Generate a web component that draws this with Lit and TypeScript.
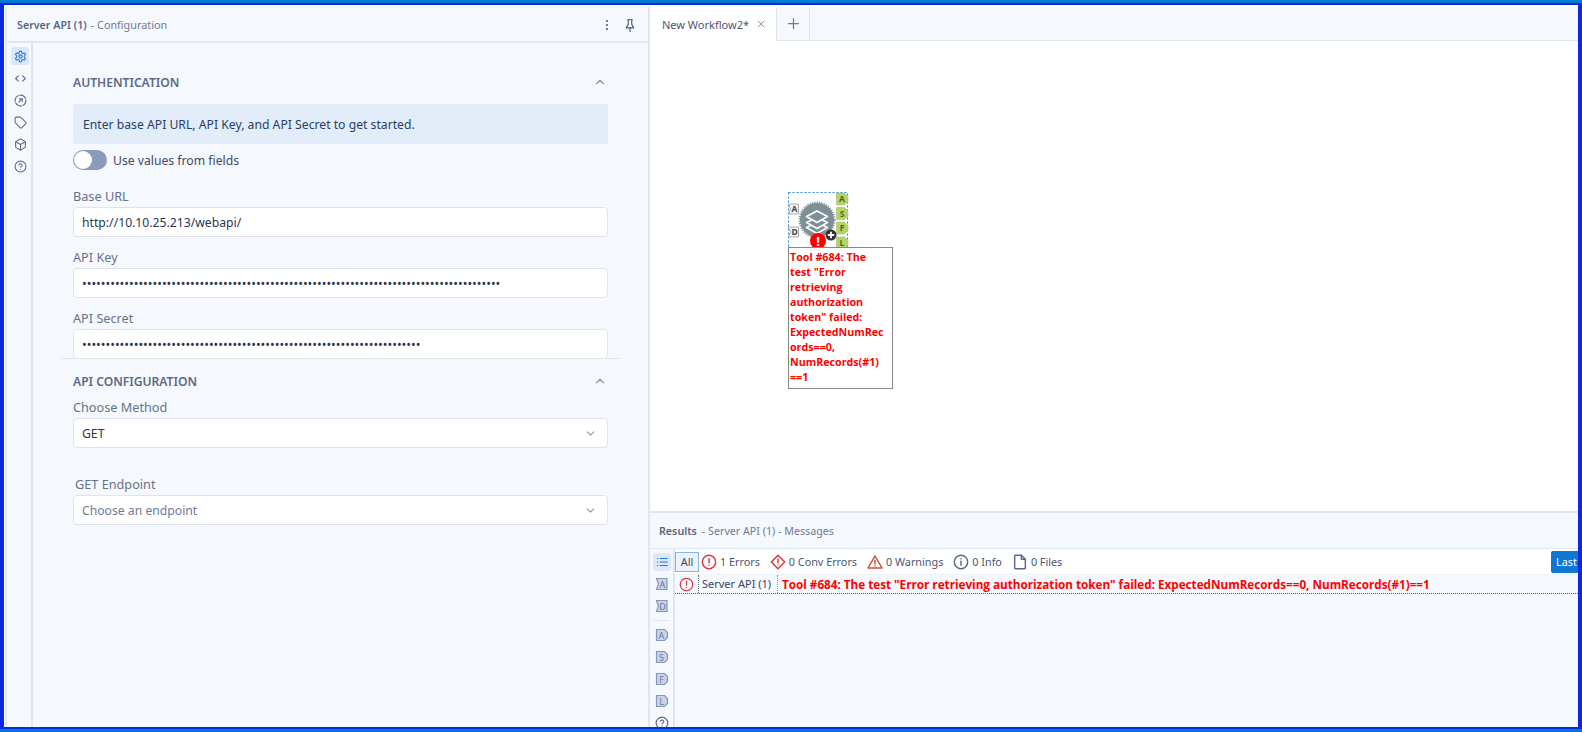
import { LitElement, html, css, svg } from "lit";
import { customElement } from "lit/decorators.js";

const ic = (body: unknown, size = 14, cls = "") => html`<svg class=${cls} width=${size} height=${size} viewBox="0 0 24 24" fill="none" stroke="currentColor" stroke-width="2" stroke-linecap="round" stroke-linejoin="round">${body}</svg>`;

const gear = svg`<path d="M12.22 2h-.44a2 2 0 0 0-2 2v.18a2 2 0 0 1-1 1.73l-.43.25a2 2 0 0 1-2 0l-.15-.08a2 2 0 0 0-2.73.73l-.22.38a2 2 0 0 0 .73 2.73l.15.1a2 2 0 0 1 1 1.72v.51a2 2 0 0 1-1 1.74l-.15.09a2 2 0 0 0-.73 2.73l.22.38a2 2 0 0 0 2.73.73l.15-.08a2 2 0 0 1 2 0l.43.25a2 2 0 0 1 1 1.73V20a2 2 0 0 0 2 2h.44a2 2 0 0 0 2-2v-.18a2 2 0 0 1 1-1.73l.43-.25a2 2 0 0 1 2 0l.15.08a2 2 0 0 0 2.73-.73l.22-.39a2 2 0 0 0-.73-2.73l-.15-.08a2 2 0 0 1-1-1.74v-.5a2 2 0 0 1 1-1.74l.15-.09a2 2 0 0 0 .73-2.73l-.22-.38a2 2 0 0 0-2.73-.73l-.15.08a2 2 0 0 1-2 0l-.43-.25a2 2 0 0 1-1-1.73V4a2 2 0 0 0-2-2z"/><circle cx="12" cy="12" r="3"/>`;
const code = svg`<path d="m8 7-5 5 5 5"/><path d="m16 7 5 5-5 5"/>`;
const arrowCircle = svg`<circle cx="12" cy="12" r="10" stroke-dasharray="13 2.7" stroke-dashoffset="3"/><path d="M9 15l6-6"/><path d="M10 9h5v5"/>`;
const tag = svg`<path d="M12.586 2.586A2 2 0 0 0 11.172 2H4a2 2 0 0 0-2 2v7.172a2 2 0 0 0 .586 1.414l8.704 8.704a2.426 2.426 0 0 0 3.42 0l6.58-6.58a2.426 2.426 0 0 0 0-3.42z"/>`;
const box = svg`<path d="M21 8a2 2 0 0 0-1-1.73l-7-4a2 2 0 0 0-2 0l-7 4A2 2 0 0 0 3 8v8a2 2 0 0 0 1 1.73l7 4a2 2 0 0 0 2 0l7-4A2 2 0 0 0 21 16Z"/><path d="m3.3 7 8.7 5 8.7-5"/><path d="M12 22V12"/>`;
const help = svg`<circle cx="12" cy="12" r="10"/><path d="M9.09 9a3 3 0 0 1 5.83 1c0 2-3 3-3 3"/><path d="M12 17h.01"/>`;
const errC = svg`<circle cx="12" cy="12" r="10"/><path d="M12 7v6"/><path d="M12 16.8h.01"/>`;
const diamond = svg`<path d="M12 2 22 12 12 22 2 12Z"/><path d="M12 7.5v5.5"/><path d="M12 16.3h.01"/>`;
const warn = svg`<path d="M12 3 22.5 21h-21Z"/><path d="M12 9.5v5.5"/><path d="M12 18h.01"/>`;
const info = svg`<circle cx="12" cy="12" r="10"/><path d="M12 11v6"/><path d="M12 7.5h.01"/>`;
const file = svg`<path d="M14 2H5a1 1 0 0 0-1 1v18a1 1 0 0 0 1 1h14a1 1 0 0 0 1-1V8z"/><path d="M14 2v6h6"/>`;
const list = svg`<path d="M9 6h12M9 12h12M9 18h12"/><path d="M4 6h.5M4 12h.5M4 18h.5"/>`;
const chevUp = svg`<path d="m6 15 6-6 6 6"/>`;
const chevDown = svg`<path d="m6 9 6 6 6-6"/>`;
const pin = svg`<path d="M12 17v6"/><path d="M8 3h8"/><path d="M9 3v8l-3 5v1h12v-1l-3-5V3"/>`;

const railTag = (letter: string, input: boolean) => html`<svg class="rtag" width="18" height="14" viewBox="0 0 18 14">
  <path d=${input ? "M3.500 1.500h10.500v11H3.500l2-5.500z" : "M3.500 1.500h8l3 3v5l-3 3h-8z"} fill="#c8d3e8" stroke="#8697bd" stroke-width="1.200"/>
  <text x=${input ? 9.5 : 8.5} y="10.500" font-size="9" font-family="Noto Sans, sans-serif" text-anchor="middle" fill="#66769c">${letter}</text>
</svg>`;

@customElement("app-root")
export class AppRoot extends LitElement {
  static styles = css`
    :host { display: block; width: 1582px; height: 732px; font-family: "Noto Sans", "Open Sans", sans-serif; font-size: 12.200px; }
    * { box-sizing: border-box; }
    .outer { width: 1582px; height: 732px; border-top: 3px solid #0078d4; border-bottom: 3px solid #0078d4; overflow: hidden; }
    .frame { height: 726px; border: solid #0a28e6; border-width: 2px 4px; background: #fff; padding: 2px 0 0 1px; }
    .main { display: flex; height: 720px; border-left: 2px solid #e3e7ef; background: #f5f8fd; }

    .left { width: 641px; flex: none; display: flex; flex-direction: column; border-top: 1px solid #eef1f6; }
    .head { height: 35px; flex: none; display: flex; align-items: center; padding: 0 11px 0 10px; border-bottom: 2px solid #dfe5f1; font-size: 10.800px; color: #6e7a96; }
    .head b { font-weight: 600; font-size: 10.700px; color: #5a6680; margin-right: 4px; }
    .head .sp { flex: 1; }
    .head svg { color: #4f5c78; }
    .dots { margin-right: 10px; }
    .body { flex: 1; display: flex; min-height: 0; }
    .rail { width: 26px; flex: none; border-right: 2px solid #dfe5f1; display: flex; flex-direction: column; align-items: center; padding: 4px 0 0 2px; gap: 4px; color: #5f6c88; }
    .rbtn { width: 18px; height: 18px; border-radius: 3px; display: flex; align-items: center; justify-content: center; flex: none; }
    .rbtn.on { background: #dbe8f9; color: #1f78d1; }
    .content { flex: 1; padding: 29px 0 0 40px; }
    .col { width: 535px; }
    .sechead { height: 20px; display: flex; align-items: center; justify-content: space-between; font-size: 12.100px; font-weight: 600; color: #5d6a85; }
    .sechead svg { color: #8a97b2; margin-right: 1px; }
    .note { margin-top: 12px; height: 40px; border-radius: 3px; background: #e2edf9; display: flex; align-items: center; padding-left: 10px; color: #27406a; }
    .tog { margin-top: 6px; height: 20px; display: flex; align-items: center; gap: 6px; color: #3f4a66; }
    .track { width: 34px; height: 20px; border-radius: 10px; background: #8c9abb; padding: 1px; display: flex; }
    .knob { width: 18px; height: 18px; border-radius: 50%; background: #fff; }
    .lab { height: 19px; line-height: 17px; font-size: 12.700px; color: #67728c; }
    .lab.t18 { margin-top: 18px; }
    .lab.t12 { margin-top: 12px; }
    .lab.t8 { margin-top: 8px; }
    .lab.t28 { margin-top: 28px; padding-left: 2px; }
    .fld { height: 30px; background: #fff; border: 1px solid #dde3f0; border-radius: 4px; display: flex; align-items: center; justify-content: space-between; padding: 0 10px 0 8px; color: #2a3550; white-space: nowrap; overflow: hidden; }
    .fld.ph { color: #6f7b96; }
    .fld svg { color: #8a97b2; }
    .pw { font-size: 12.500px; color: #2a3550; }
    .rule { height: 1px; background: #dfe5f1; margin: -1px 0 0 -12px; width: 559px; position: relative; }
    .sechead.api { margin-top: 12px; }

    .split { width: 2px; flex: none; background: #dfe5f1; }
    .right { flex: 1; min-width: 0; display: flex; flex-direction: column; }
    .tabs { height: 34px; flex: none; display: flex; border-bottom: 1px solid #dfe5f1; }
    .tab { width: 127px; height: 34px; flex: none; background: #fff; display: flex; align-items: center; padding-left: 12px; color: #4a5672; font-size: 11px; border-right: 1px solid #dfe5f1; gap: 6px; white-space: nowrap; }
    .tab svg { color: #8a97b2; flex: none; }
    .plus { width: 33px; flex: none; border-right: 1px solid #dfe5f1; display: flex; align-items: center; justify-content: center; color: #6e7a96; }
    .canvas { flex: 1; min-height: 0; background: #fff; position: relative; }
    .node { position: absolute; left: 137px; top: 148px; }
    .tip { position: absolute; left: 138px; top: 206px; width: 105px; height: 142px; border: 1px solid #888; background: #fff; color: #f00; font-family: "Open Sans", sans-serif; font-weight: 700; font-size: 10.700px; line-height: 15px; padding: 2px 7px 0 1px; overflow-wrap: anywhere; }
    .hsplit { height: 2px; flex: none; background: #dfe5f1; }
    .reshead { height: 36px; flex: none; display: flex; align-items: center; padding-left: 9px; border-bottom: 1px solid #dfe5f1; font-size: 10.700px; color: #6e7a96; }
    .reshead b { font-weight: 600; font-size: 10.700px; color: #5a6680; margin-right: 5px; }
    .resbody { height: 178px; flex: none; display: flex; overflow: hidden; }
    .rrail { width: 25px; flex: none; border-right: 2px solid #dfe5f1; display: flex; flex-direction: column; align-items: center; padding-top: 4px; color: #5f6c88; overflow: hidden; }
    .rrail .rbtn { margin-bottom: 6px; }
    .rrail .rtag { flex: none; margin-bottom: 8px; }
    .rrail .sep { flex: none; width: 17px; height: 1px; background: #dfe5f1; margin: -1px 0 7px; }
    .rrail svg.q { flex: none; }
    .msgs { flex: 1; min-width: 0; display: flex; flex-direction: column; }
    .bar { height: 26px; flex: none; background: #fff; display: flex; align-items: center; border-bottom: 1px solid #eef1f6; font-size: 10.800px; color: #4a5672; overflow: hidden; }
    .all { width: 24px; height: 20px; background: #eef3fb; border: 1px solid #8ab4e8; display: flex; align-items: center; justify-content: center; color: #3b4660; margin-right: 2px; flex: none; }
    .it { display: flex; align-items: center; gap: 3px; margin-right: 10px; flex: none; }
    .it svg { stroke-width: 2.200; }
    .it.e svg { color: #d63a43; }
    .it.w svg { color: #c9502e; }
    .it.g svg { color: #5a6a8e; }
    .grow { flex: 1; }
    .last { flex: none; width: 27px; height: 22px; background: #0f76d2; color: #fff; border-radius: 2px 0 0 2px; display: flex; align-items: center; padding-left: 5px; white-space: nowrap; overflow: hidden; }
    .row { height: 19px; flex: none; display: flex; align-items: center; border-bottom: 1px dotted #555; font-size: 11px; color: #3b4660; white-space: nowrap; }
    .row .ec { width: 24px; height: 100%; display: flex; align-items: center; justify-content: center; color: #d63a43; border-right: 1px dotted #667; flex: none; }
    .row .nm { width: 79px; height: 100%; line-height: 17px; padding-left: 3px; border-right: 1px dotted #6a95d0; flex: none; }
    .row .ms { padding-left: 4px; color: #f00; font-weight: 700; font-family: "Open Sans", sans-serif; font-size: 11.700px; }
  `;

  render() {
    const railIcons = [gear, code, arrowCircle, tag, box, help];
    return html`<div class="outer"><div class="frame"><div class="main">
      <section class="left">
        <header class="head"><b>Server API (1)</b><span>- Configuration</span><span class="sp"></span>
          <svg class="dots" width="12" height="14" viewBox="0 0 12 14"><circle cx="6" cy="3" r="1.100" fill="currentColor"/><circle cx="6" cy="7" r="1.100" fill="currentColor"/><circle cx="6" cy="11" r="1.100" fill="currentColor"/></svg>
          ${ic(pin, 14)}
        </header>
        <div class="body">
          <nav class="rail">${railIcons.map((p, i) => html`<div class="rbtn ${i === 0 ? "on" : ""}">${ic(p, 13)}</div>`)}</nav>
          <div class="content"><div class="col">
            <div class="sechead">AUTHENTICATION ${ic(chevUp, 14)}</div>
            <div class="note">Enter base API URL, API Key, and API Secret to get started.</div>
            <div class="tog"><div class="track"><div class="knob"></div></div>Use values from fields</div>
            <div class="lab t18">Base URL</div>
            <div class="fld">http://10.10.25.213/webapi/</div>
            <div class="lab t12">API Key</div>
            <div class="fld"><span class="pw">${"•".repeat(89)}</span></div>
            <div class="lab t12">API Secret</div>
            <div class="fld"><span class="pw">${"•".repeat(72)}</span></div>
            <div class="rule"></div>
            <div class="sechead api">API CONFIGURATION ${ic(chevUp, 14)}</div>
            <div class="lab t8">Choose Method</div>
            <div class="fld">GET ${ic(chevDown, 13)}</div>
            <div class="lab t28">GET Endpoint</div>
            <div class="fld ph">Choose an endpoint ${ic(chevDown, 13)}</div>
          </div></div>
        </div>
      </section>
      <div class="split"></div>
      <section class="right">
        <div class="tabs">
          <div class="tab">New Workflow2* ${ic(svg`<path d="M6 6l12 12M18 6 6 18"/>`, 12)}</div>
          <div class="plus">${ic(svg`<path d="M12 4v16M4 12h16"/>`, 15)}</div>
        </div>
        <div class="canvas">
          <svg class="node" width="64" height="60" viewBox="787 189 64 60">
            <rect x="788.500" y="192.500" width="59" height="60" fill="none" stroke="#1f8ae0" stroke-dasharray="2 2"/>
            <circle cx="817" cy="220" r="17" fill="#7f8f96"/>
            <circle cx="817" cy="220" r="17.500" fill="none" stroke="#7f8f96" stroke-width="2" stroke-dasharray="1.200 1.200"/>
            <g fill="#7f8f96" stroke="#fff" stroke-width="1.600" stroke-linejoin="round">
              <path d="M817 222.500l10.500 5-10.500 6-10.500-6z"/>
              <path d="M817 217.500l10.500 5-10.500 6-10.500-6z"/>
              <path d="M817 211l10.500 5.500-10.500 6-10.500-6z"/>
            </g>
            ${[["A", 199], ["S", 213.5], ["F", 228], ["L", 243]].map(([l, y]) => svg`
              <path d="M836.500 ${+y - 6}h8l3.500 3.500v5l-3.500 3.500h-8z" fill="#b6d36b" stroke="#a4c458" stroke-width=".6"/>
              <text x="842" y=${+y + 3.2} font-size="8.500" font-weight="700" font-family="Noto Sans, sans-serif" text-anchor="middle" fill="#4f6a20">${l}</text>`)}
            ${[["A", 209], ["D", 232]].map(([l, y]) => svg`
              <path d="M788.500 ${+y - 5}h10v10h-10l2-5z" fill="#f2f2f2" stroke="#999" stroke-width=".8"/>
              <text x="794.500" y=${+y + 3.2} font-size="8.500" font-weight="700" font-family="Noto Sans, sans-serif" text-anchor="middle" fill="#3a4560">${l}</text>`)}
            <circle cx="831" cy="235" r="5.500" fill="#333"/>
            <path d="M831 231.800v6.400M827.800 235h6.400" stroke="#fff" stroke-width="1.800"/>
            <circle cx="818" cy="241" r="8" fill="#f00"/>
            <text x="818" y="246" font-size="13" font-weight="700" font-family="Noto Sans, sans-serif" text-anchor="middle" fill="#fff">!</text>
          </svg>
          <div class="tip">Tool #684: The test "Error retrieving authorization token" failed: ExpectedNumRecords==0, NumRecords(#1)<br>==1</div>
        </div>
        <div class="hsplit"></div>
        <div class="reshead"><b>Results</b><span>- Server API (1) - Messages</span></div>
        <div class="resbody">
          <nav class="rrail">
            <div class="rbtn on">${ic(list, 14)}</div>
            ${railTag("A", true)}${railTag("D", true)}
            <div class="sep"></div>
            ${railTag("A", false)}${railTag("S", false)}${railTag("F", false)}${railTag("L", false)}
            ${ic(help, 14, "q")}
          </nav>
          <div class="msgs">
            <div class="bar">
              <div class="all">All</div>
              <div class="it e">${ic(errC, 16)}<span>1 Errors</span></div>
              <div class="it e">${ic(diamond, 16)}<span>0 Conv Errors</span></div>
              <div class="it w">${ic(warn, 16)}<span>0 Warnings</span></div>
              <div class="it g">${ic(info, 16)}<span>0 Info</span></div>
              <div class="it g">${ic(file, 16)}<span>0 Files</span></div>
              <div class="grow"></div>
              <div class="last">Last</div>
            </div>
            <div class="row">
              <div class="ec">${ic(errC, 15)}</div>
              <div class="nm">Server API (1)</div>
              <div class="ms">Tool #684: The test "Error retrieving authorization token" failed: ExpectedNumRecords==0, NumRecords(#1)==1</div>
            </div>
          </div>
        </div>
      </section>
    </div></div></div>`;
  }
}
